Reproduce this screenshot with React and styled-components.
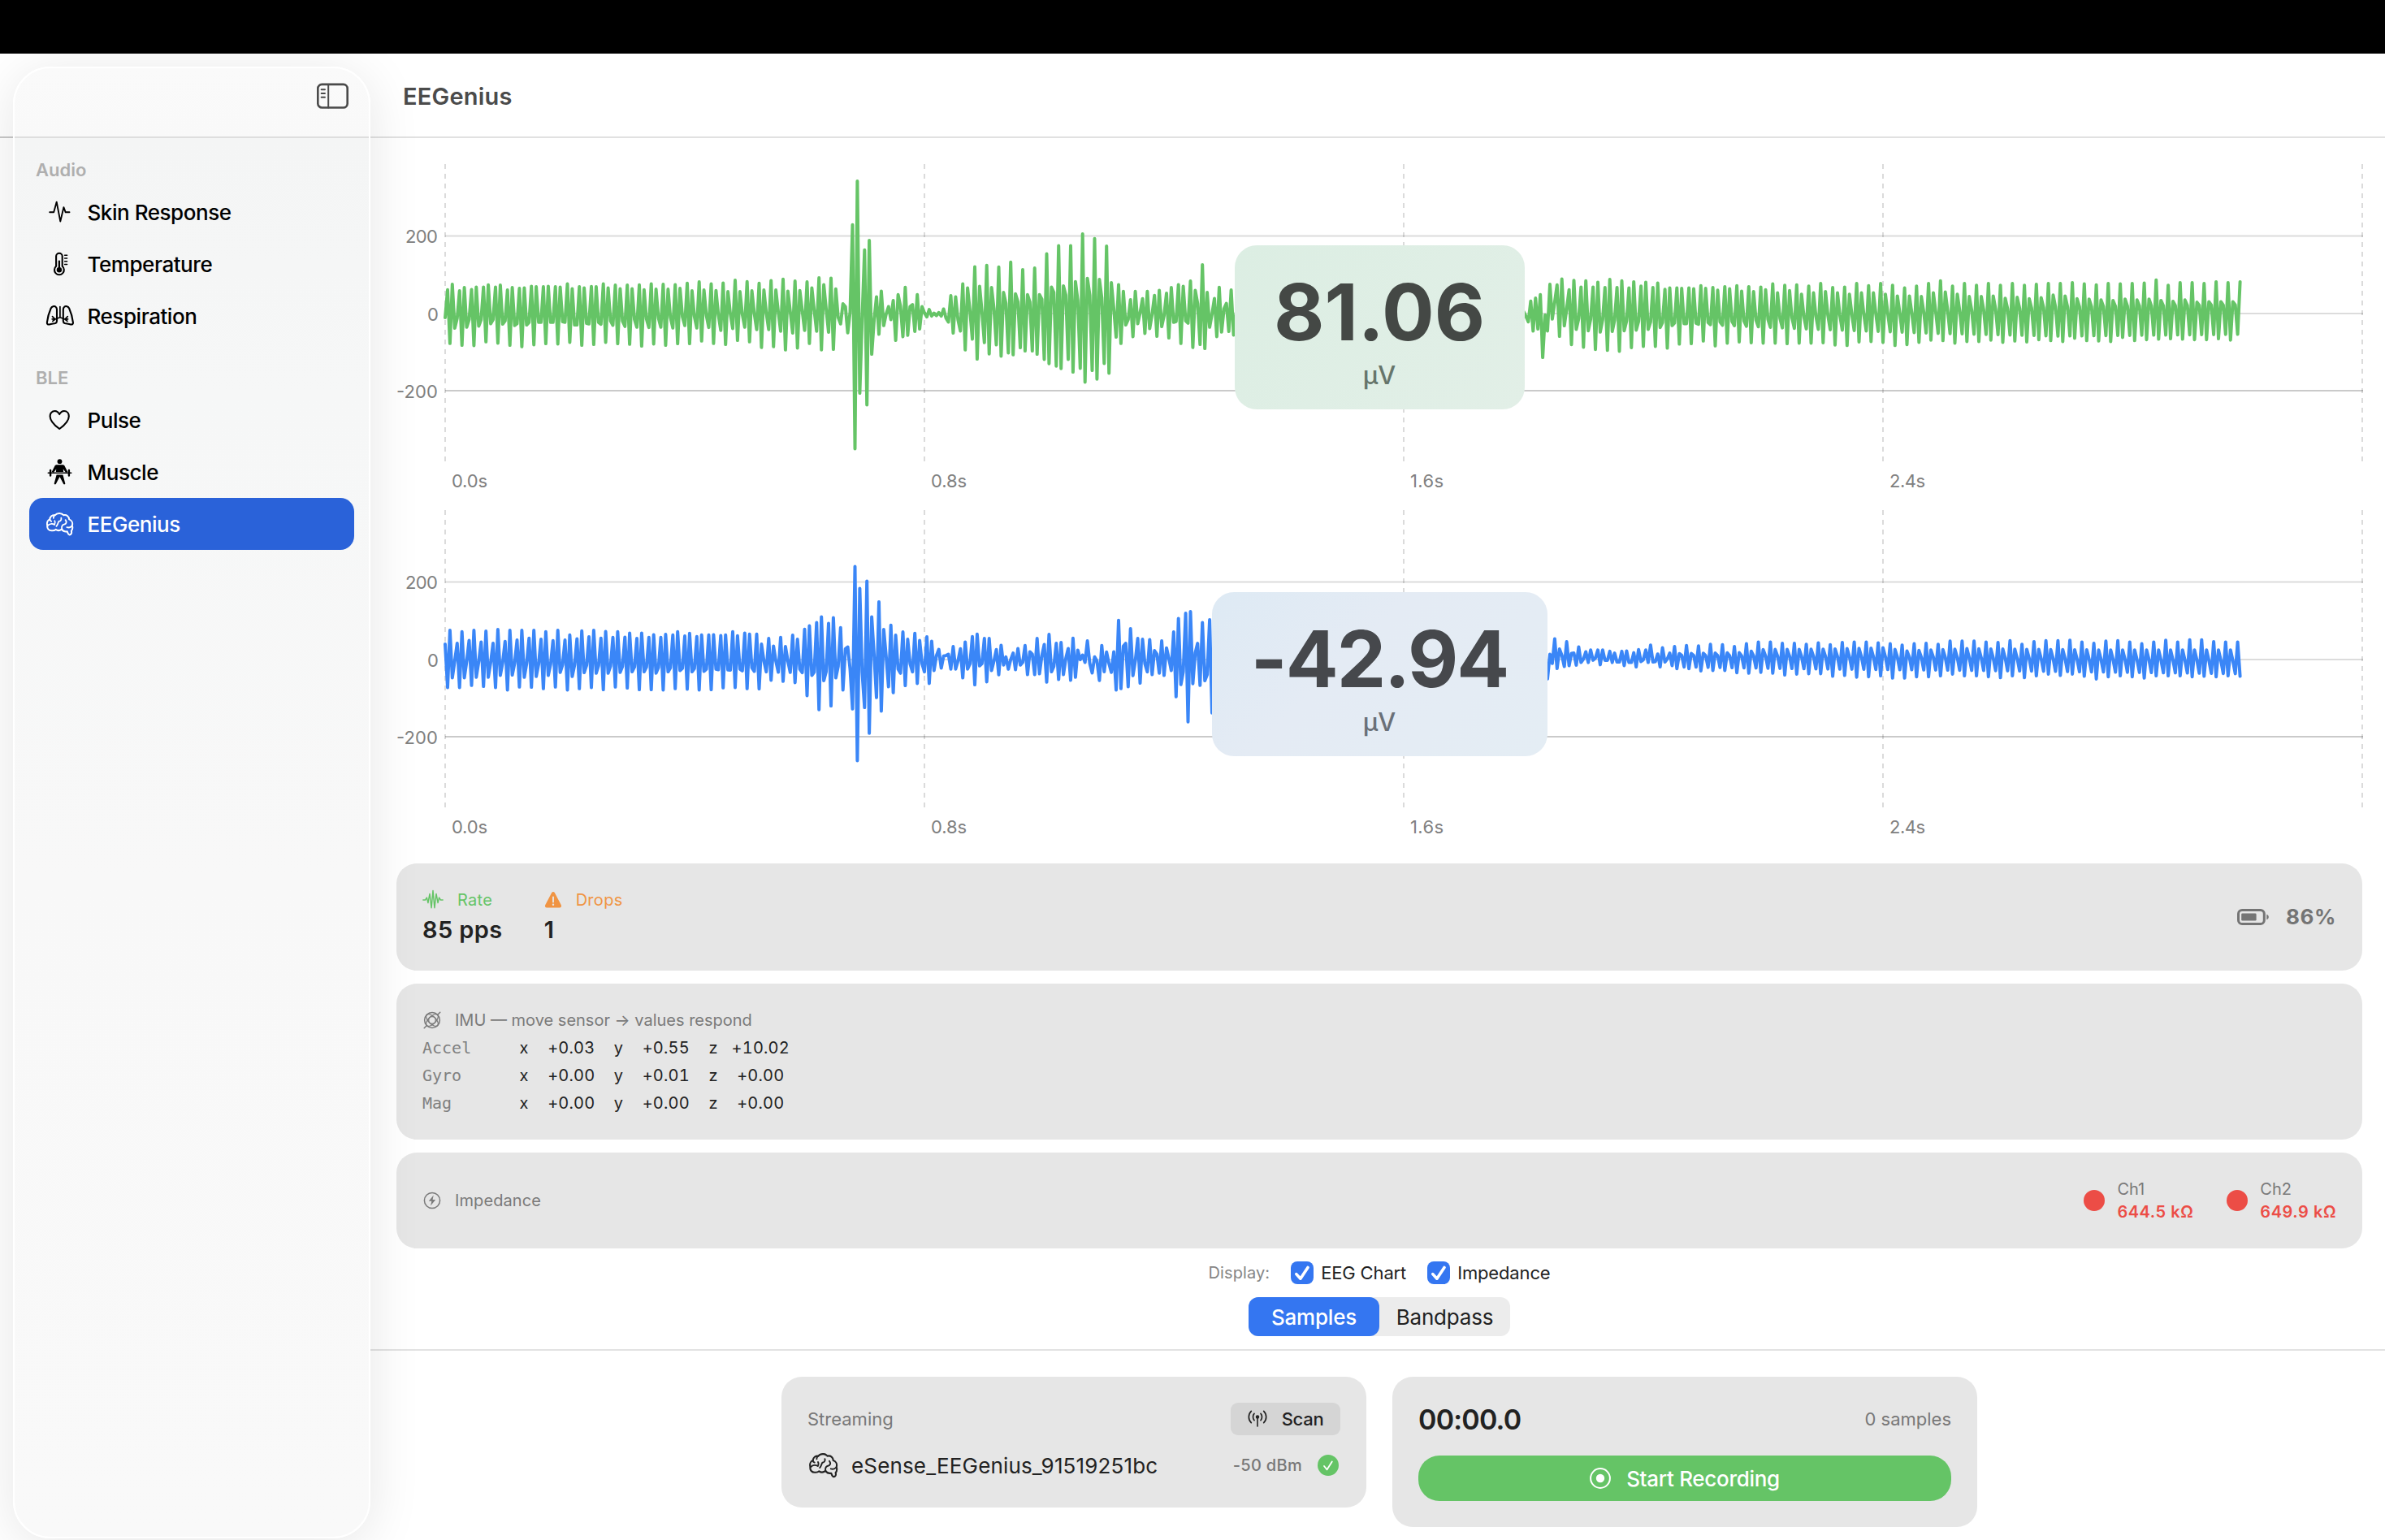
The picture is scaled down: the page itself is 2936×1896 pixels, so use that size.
import React from 'react';
import styled, { createGlobalStyle } from 'styled-components';

const GlobalStyle = createGlobalStyle`
  html, body { margin: 0; padding: 0; background: #fff; }
  * { box-sizing: border-box; }
  body { width: 2936px; height: 1896px; overflow: hidden; font-family: Inter, "Liberation Sans", sans-serif; color: #000; }
`;

/* ---------- signal data ---------- */

// Mains hum repeats every five samples, so steady stretches are kept as five tracks.
const weave = (...tracks) => {
  const out = [];
  for (let i = 0; i < tracks[0].length; i++) tracks.forEach((t) => t[i] !== undefined && out.push(t[i]));
  return out;
};
const ramp = (n, stops) =>
  Array.from({ length: n }, (_, i) => {
    let j = 0;
    while (j < stops.length - 2 && stops[j + 1][0] <= i) j++;
    const [a, va] = stops[j];
    const [b, vb] = stops[j + 1];
    return va + ((vb - va) * (i - a)) / (b - a);
  });
const level = (raw, zero, gain) => raw.map((v) => (v - zero) * gain);

const greenStart = level(
  [
    ...weave(
      [633, 635, 640, 640, 640, 645, 655, 650, 650, 650, 650, 660, 656, 657, 661, 665, 668, 669, 668, 671, 662, 671, 669, 680, 673, 668, 677, 677, 683, 690, 680, 683, 687],
      [530, 534, 529, 520, 520, 531, 525, 517, 519, 519, 508, 519, 518, 508, 513, 513, 512, 508, 510, 511, 506, 501, 508, 505, 495, 500, 506, 496, 491, 498, 501, 486, 487],
      [728, 735, 736, 722, 727, 735, 740, 733, 729, 730, 724, 735, 732, 724, 729, 731, 738, 730, 735, 729, 729, 719, 728, 732, 717, 722, 743, 740, 752, 745, 728, 752, 750],
      [510, 522, 520, 512, 513, 522, 523, 519, 517, 520, 526, 523, 519, 523, 526, 526, 530, 528, 528, 525, 534, 531, 533, 537, 537, 534, 531, 531, 535, 533, 523, 511, 527],
      [672, 668, 664, 655, 657, 662, 660, 650, 650, 648, 660, 654, 650, 645, 645, 640, 638, 635, 632, 630, 628, 625, 622, 620, 620, 618, 615, 612, 610, 608, 605, 600, 632],
    ),
    656, 582, 592, 689, 612, 290, 1117, 129, 912, 640, 383, 955, 348, 768, 640, 556, 694, 535, 662, 620,
    592, 640, 570, 717, 548, 590, 703, 521, 698, 592, 585, 684, 548, 675, 592, 615,
    630, 603, 627, 616, 625, 614, 627, 601, 635, 649, 552, 690, 556, 640, 682, 508, 752, 523, 610, 712,
    445, 786, 517, 610, 725, 440, 767, 522, 600, 733, 446, 775, 540, 580, 763, 428, 770, 545, 575, 744,
    456, 756, 548, 575, 756, 450, 768, 548, 565, 787, 397, 803, 520, 540, 812, 367, 821, 516, 550, 787,
    367, 834, 500, 570, 820, 324, 871, 488, 550, 828, 341, 860, 492, 560, 802, 369, 838, 504, 600, 705,
    511, 728, 536, 660, 640, 567, 703, 536, 655, 615, 563, 691, 536, 673, 620, 551, 702, 532, 666, 625,
    543, 708, 522, 650, 647, 511, 728, 517, 645, 653, 498, 743, 532, 580, 732, 438, 747, 540, 668, 620,
    562, 703, 521, 686, 600, 580, 684, 531, 697,
    ...weave(Array(24).fill(620), Array(24).fill(560), Array(24).fill(690), Array(24).fill(550), Array(24).fill(640)),
    610,
  ],
  617,
  1 / 3,
);
const greenMid = level(
  [-11, -31, 45, -65, 56, -58, 69, -163, -6, -65, 107, -21, 42, 105, -85, 127, -46, 16],
  0,
  -1 / 3,
);
const greenEnd = level(
  weave(
    [321, 315, 315, 316, 316, 317, 313, 316, 320, 317, 317, 312, 316, 314, 312, 314, 315, 308, 311, 310, 313, 307, 316, 315, 307, 312, 307, 311, 317, 313, 307, 301, 313, 307, 311, 307, 311, 307, 311, 309, 307, 307, 305, 308, 310, 307, 308, 307, 306, 299, 311, 305, 305, 307, 303, 305, 303],
    [444, 450, 455, 457, 459, 451, 448, 448, 452, 443, 442, 436, 447, 441, 438, 440, 441, 441, 442, 441, 441, 440, 445, 446, 438, 437, 439, 446, 444, 439, 434, 435, 441, 437, 437, 434, 439, 436, 438, 433, 435, 437, 430, 435, 436, 437, 428, 435, 433, 432, 431, 432, 433, 433, 431, 434],
    [300, 301, 304, 298, 301, 303, 304, 306, 317, 318, 319, 318, 322, 319, 324, 325, 321, 328, 323, 331, 328, 325, 328, 331, 328, 328, 331, 335, 335, 336, 328, 326, 331, 336, 336, 335, 340, 338, 341, 339, 333, 335, 341, 342, 344, 345, 342, 344, 342, 345, 347, 344, 349, 348, 348, 348],
    ramp(56, [[0, 410], [2, 416], [6, 410], [9, 397], [14, 391], [20, 380], [30, 370], [40, 360], [55, 355]]),
    ramp(56, [[0, 386], [9, 397], [20, 410], [30, 419], [40, 425], [55, 421]]),
  ),
  374,
  0.5485,
);
const GREEN = [...greenStart, ...greenMid, ...greenEnd];

const blueStart = level(
  [
    ...weave(
      [458, 455, 444, 450, 455, 448, 443, 436, 440, 445, 443, 438, 431, 436, 433, 432, 437, 433, 433, 424, 428, 430, 424, 426, 412, 417, 421, 437, 433, 425, 403, 378, 381],
      [618, 618, 610, 614, 618, 627, 616, 617, 622, 616, 627, 622, 618, 626, 616, 620, 626, 626, 627, 622, 624, 627, 626, 619, 618, 622, 623, 591, 595, 600, 648, 700, 686],
      [407, 412, 407, 410, 404, 407, 407, 407, 412, 407, 424, 409, 407, 411, 412, 417, 417, 423, 422, 412, 418, 424, 423, 424, 427, 421, 458, 465, 467, 440, 390, 357, 360],
      [582, 582, 580, 580, 573, 572, 580, 577, 573, 562, 577, 563, 565, 565, 562, 560, 560, 565, 560, 555, 560, 558, 550, 553, 550, 545, 520, 520, 520, 550, 573, 593, 582],
      ramp(33, [[0, 520], [10, 535], [20, 548], [26, 560], [29, 563], [31, 560], [32, 540]]),
    ),
    397, 627, 475, 468, 550, 697, 171, 888, 252, 560, 692, 225, 787, 357, 500, 655, 302, 705, 404, 500,
    615, 388, 637, 425, 550, 565, 413, 611, 440, 530, 560, 418, 603, 444, 530, 560, 431, 603, 447, 555,
    500, 477, 546, 502, 500, 495, 550, 467, 550, 520, 475, 582, 450, 550, 530, 430, 608, 421, 538, 530,
    437, 597, 437, 555, 520, 478, 571, 462, 535, 505, 550, 515, 491, 552, 474, 535, 525, 463, 570, 486,
    495, 570, 437, 567, 500, 459, 598, 422, 560, 540, 455, 588, 452, 570, 510, 474, 591, 436, 580, 480,
    515, 498, 525, 446, 530, 564, 505, 520, 592, 463, 560, 487, 530, 562, 486, 627, 370, 622, 465, 455,
    615, 401, 574, 520, 437, 602, 440, 530, 560, 441, 570, 482, 495, 565, 446, 573, 472, 510, 555, 413,
    652, 363, 607, 560, 344, 745, 338, 604, 490, 455, 610, 378, 593, 570, 368, 712,
    ...weave(Array(28).fill(480), Array(28).fill(560), Array(28).fill(450), Array(28).fill(570), Array(28).fill(520)).slice(0, 139),
  ],
  514,
  1 / 3,
);
const blueMid = level([-72, 19, -15, 76, -34, 38, 15, -26, 65, -23, 22], 0, -1 / 3);
const blueEnd = level(
  [
    1137, 1164, 1123, 1158, 1150, 1134, 1158, 1130, 1153, 1148, 1130, 1163, 1130, 1153, 1153, 1133, 1158, 1137, 1157, 1157, 1133,
    1165, 1132, 1158, 1158, 1136, 1168, 1129, 1156, 1152, 1130, 1158, 1119, 1157, 1156, 1139, 1168, 1125, 1157, 1150, 1137, 1165,
    ...weave(
      [1122, 1120, 1121, 1117, 1118, 1122, 1116, 1112, 1112, 1115, 1115, 1117, 1114, 1118, 1113, 1112, 1112, 1114, 1116, 1119, 1116, 1115, 1117, 1110, 1110, 1110, 1112, 1113, 1109, 1117, 1111, 1109, 1109, 1108, 1112, 1115, 1110, 1109, 1112, 1116, 1112, 1108, 1112, 1107, 1107, 1111, 1112, 1112],
      [1172, 1172, 1177, 1176, 1176, 1181, 1182, 1180, 1182, 1186, 1184, 1183, 1183, 1189, 1187, 1191, 1190, 1188, 1193, 1193, 1190, 1190, 1188, 1184, 1188, 1188, 1190, 1192, 1188, 1192, 1188, 1184, 1187, 1184, 1189, 1195, 1190, 1188, 1190, 1193, 1188, 1188, 1188, 1190, 1189, 1190, 1188, 1189],
      ramp(47, [[0, 1138], [5, 1136], [7, 1129], [12, 1128], [17, 1125], [19, 1132], [24, 1127], [35, 1130], [46, 1130]]),
      ramp(47, [[0, 1142], [20, 1146], [46, 1154]]),
      ramp(47, [[0, 1168], [10, 1172], [25, 1176], [46, 1183]]),
    ),
  ],
  1151,
  0.5485,
);
const BLUE = [...blueStart, ...blueMid, ...blueEnd];

/* ---------- icons ---------- */

const Svg = styled.svg`
  display: block;
  flex: none;
`;
const Stroke = ({ size = 36, w = 2, box = 36, children }) => (
  <Svg width={size} height={size} viewBox={`0 0 ${box} ${box}`} fill="none" stroke="currentColor" strokeWidth={w} strokeLinecap="round" strokeLinejoin="round">
    {children}
  </Svg>
);
const SidebarToggleIcon = () => (
  <Svg width="40" height="34" viewBox="0 0 40 34" fill="none" stroke="currentColor" strokeWidth="2.6" strokeLinecap="round">
    <rect x="1.3" y="1.9" width="36.4" height="28.6" rx="5" />
    <path d="M14.2 2v28.400" strokeWidth="2" />
    <path d="M5.600 8.300h4.400M5.600 13h4.400M5.600 17.700h4.400" strokeWidth="1.900" />
  </Svg>
);
const WaveIcon = () => (
  <Stroke w={1.9}>
    <path d="M6.2 18.3h5L14.7 5.6l4.6 24 4.100-17.400 2.300 6.100h4.800" />
  </Stroke>
);
const ThermometerIcon = () => (
  <Stroke w={2.1}>
    <path d="M14.100 8.600a3.800 3.800 0 0 1 7.600 0v12.200a5.900 5.900 0 1 1-7.600 0z" />
    <path d="M17.900 14.600v9" strokeWidth="2.300" />
    <circle cx="17.900" cy="25.300" r="3.200" fill="currentColor" stroke="none" />
    <path d="M24.600 7.200h3M24.600 11h3M24.600 14.800h3M24.600 18.400h3" strokeWidth="1.500" />
  </Stroke>
);
const LungsIcon = () => (
  <Stroke w={2.1}>
    <path d="M13.600 6.800c-1.600-1.400-4.800-.8-6 1.900C5.400 13.600 3.600 20 2.900 25.900c-.3 2.300 1.100 3 3 2.500 2.300-.6 5-1 7.200-1.500 1.400-.4 1.900-1.200 1.900-2.600V10c0-1.500-.4-2.500-1.400-3.200z" />
    <path d="M24.200 6.800c1.600-1.400 4.800-.8 6 1.900 2.200 4.900 4 11.300 4.700 17.200.3 2.300-1.100 3-3 2.500-2.300-.6-5-1-7.200-1.500-1.400-.4-1.900-1.200-1.900-2.600V10c0-1.500.4-2.500 1.400-3.200z" />
    <path d="M18.900 6.600v13.200M18.900 19.800l-6 2.200-3.700-.2M12.900 22l-3.400-3.400M12.900 22l-3 2.400M18.900 19.800l6 2.200 3.700-.2M24.900 22l3.400-3.400M24.900 22l3 2.400" strokeWidth="1.700" />
  </Stroke>
);
const HeartIcon = () => (
  <Stroke w={2.1}>
    <path d="M18.200 11.100C16.800 8.300 14.800 7 12.500 7 9 7 6.600 9.800 6.600 13.400c0 6.500 6.400 11.800 11.600 15.600 5.200-3.800 11.600-9.100 11.600-15.600C29.800 9.800 27.400 7 23.900 7c-2.300 0-4.300 1.300-5.700 4.100z" />
  </Stroke>
);
const LifterIcon = () => (
  <Stroke w={2}>
    <g fill="currentColor" stroke="none">
      <circle cx="18.500" cy="5.200" r="2.900" />
      <path d="M14.800 9.200h7.400c1.100 0 2 .5 2.400 1.500l3.700 7.200-2.200 1.200-3.300-4.600.3 3.600h-9.200l.3-3.600-3.300 4.600-2.200-1.200 3.700-7.200c.4-1 1.300-1.500 2.400-1.500z" />
      <path d="M14.600 21.400h7.800l2.900 10.900c.2 1.200-1.700 1.600-2.200.5L18.500 24l-4.600 8.800c-.5 1.100-2.400.7-2.200-.5z" />
    </g>
    <path d="M4.300 19.300h28.400" strokeWidth="1.600" />
    <path d="M7.100 16v6.600M29.900 16v6.600" strokeWidth="2.400" />
  </Stroke>
);
const BrainIcon = ({ size }) => (
  <Stroke w={2} size={size}>
    <path d="M9.200 26.300C5 26.700 2.700 23.500 3.300 20c-1-3.600.4-6.600 3-7.600.3-3.600 3.200-5.600 6.300-5.100 2.600-3.200 8.300-3.200 10.600-.1 4-.9 6.700 1.800 6.900 5.200 3.200 1.200 4.800 4.300 3.700 7.600 1 2.800.3 5.200-1 6.800.9 2.500-.3 4.700-2.400 4.600-1.600-.2-2-2.500-2.700-4.200-2.800.6-5.300-.6-6.700-2.600-2.300 1.700-5.500 1.700-7.400.3-1 .9-2.500 1.500-4.400 1.400z" />
    <path d="M6.300 12.500c.2 1 .9 1.900 1.900 2.300M3.600 20.200c2.400-2.600 6-2.700 8.500-1.200.9-1.700 1-3.300.2-4.800M12.600 7.300c-1.300.8-2 2-1.800 3.500M20.300 10.600c.6 2.200-.6 3.900-2.900 4.300M17.400 14.900c-1.300 2.200-1.200 4-3 6M25.600 13.100c2 2.600 1 5-1.700 5.600-2.300.5-3.500 2.500-2.700 5.900M33.300 20.600c-1.400 1.700-3.800 2.200-6 1.500" strokeWidth="1.800" />
  </Stroke>
);
const RateIcon = () => (
  <Stroke size={26} box={24} w={1.35}>
    <path d="M.8 12h2.500L5 9.300l1.400 6L8.300 5l1.900 16L12 1.300 13.800 21l1.900-16 1.900 10.300 1.400-6 1.700 2.700h2.500" />
  </Stroke>
);
const WarningIcon = () => (
  <Svg width="22" height="22" viewBox="0 0 22 22">
    <path d="M9.200 2.100c.8-1.400 2.800-1.400 3.600 0l8 15.200c.8 1.500-.2 3.200-1.900 3.200H3.100c-1.700 0-2.700-1.700-1.900-3.200z" fill="currentColor" />
    <path d="M11 7.500v6" stroke="#e6e6e6" strokeWidth="1.900" strokeLinecap="round" />
    <circle cx="11" cy="16.800" r="1.200" fill="#e6e6e6" />
  </Svg>
);
const GyroIcon = () => (
  <Stroke size={24} box={24} w={1.5}>
    <circle cx="12" cy="12" r="9.400" />
    <circle cx="12" cy="12" r="4.300" strokeWidth="1.300" />
    <ellipse cx="12" cy="12" rx="9.400" ry="4.600" transform="rotate(-45 12 12)" strokeWidth="1.300" />
    <ellipse cx="12" cy="12" rx="9.400" ry="4.600" transform="rotate(45 12 12)" strokeWidth="1.300" />
    <path d="M18.800 5.200l3-3M5.200 18.800l-3 3" strokeWidth="1.500" />
  </Stroke>
);
const BoltIcon = () => (
  <Stroke size={24} box={24} w={1.5}>
    <circle cx="12" cy="12" r="9.600" />
    <path d="M13.700 5.600l-5.900 7.200h3.500l-1.200 5.600 6.100-7.400h-3.600z" fill="currentColor" stroke="none" />
  </Stroke>
);
const BatteryIcon = () => (
  <Svg width="40" height="20" viewBox="0 0 40 20">
    <rect x="1.500" y="1.500" width="31.800" height="17" rx="4.600" fill="none" stroke="currentColor" strokeWidth="3" />
    <rect x="5.200" y="5.400" width="18.400" height="9.200" rx="1.400" fill="currentColor" />
    <path d="M36.300 6.800c1.500.5 2.500 1.800 2.500 3.200s-1 2.700-2.500 3.200z" fill="currentColor" />
  </Svg>
);
const AntennaIcon = () => (
  <Stroke size={24} box={24} w={1.7}>
    <circle cx="12" cy="9.500" r="2.200" fill="currentColor" stroke="none" />
    <path d="M12 10v11" strokeWidth="1.600" />
    <path d="M8 5.400c-2 2.200-2 6 0 8.200M16 5.400c2 2.200 2 6 0 8.200M4.300 2.400c-4 4-4 10.200 0 14.200M19.700 2.400c4 4 4 10.200 0 14.200" />
  </Stroke>
);
const CheckCircleIcon = () => (
  <Svg width="26" height="26" viewBox="0 0 26 26">
    <circle cx="13" cy="13" r="13" fill="#65c466" />
    <path d="M8 14l3.600 4.300 6.200-9.800" fill="none" stroke="#fff" strokeWidth="1.800" strokeLinecap="round" strokeLinejoin="round" />
  </Svg>
);
const RecordIcon = () => (
  <Svg width="26" height="26" viewBox="0 0 26 26">
    <circle cx="13" cy="13" r="11.900" fill="none" stroke="#fff" strokeWidth="2" />
    <circle cx="13" cy="13" r="5.200" fill="#fff" />
  </Svg>
);
const CheckMark = () => (
  <Svg width="28" height="28" viewBox="0 0 28 28">
    <path d="M6.800 15.600l5.100 5.600 9.100-13.800" fill="none" stroke="#fff" strokeWidth="3.600" strokeLinecap="round" strokeLinejoin="round" />
  </Svg>
);

/* ---------- window ---------- */

const Screen = styled.div`
  width: 2936px;
  height: 1896px;
  display: flex;
  flex-direction: column;
  background: #fff;
  overflow: hidden;
`;
const MenuBar = styled.div`
  height: 66px;
  flex: none;
  background: #000;
  position: relative;
  z-index: 3;
`;
const Window = styled.div`
  flex: 1;
  display: flex;
  min-height: 0;
`;
const SidebarColumn = styled.div`
  width: 456px;
  flex: none;
  padding: 16px 0 2px 16px;
  position: relative;
  z-index: 2;
  background: linear-gradient(#fff 102px, #c8c8c8 102px, #c8c8c8 104px, #fff 104px);
`;
const Sidebar = styled.nav`
  height: 100%;
  border-radius: 46px;
  border: 2px solid #fff;
  padding: 0 18px;
  background: linear-gradient(#fafafa 0, #f9f9f9 84px, #dedede 84px, #dedede 86px, #f4f5f5 86px, #f6f7f7 400px, #f8f8f8 1000px, #f9f9f9 100%);
  background-origin: padding-box;
  box-shadow: 0 8px 64px rgba(0, 0, 0, 0.1);
`;
const SidebarTop = styled.div`
  height: 105px;
  display: flex;
  justify-content: flex-end;
  padding: 18px 6px 0 0;
  color: #4a4a4a;
`;
const SectionTitle = styled.div`
  height: 40px;
  margin-top: ${(p) => p.$gap || 0}px;
  padding-left: 8px;
  font-size: 22px;
  font-weight: 600;
  line-height: 40px;
  color: #afafaf;
`;
const NavItem = styled.div`
  height: 64px;
  display: flex;
  align-items: center;
  gap: 17px;
  padding-left: 18.500px;
  border-radius: 17px;
  font-size: 26px;
  font-weight: 500;
  letter-spacing: -0.450px;
  color: ${(p) => (p.$active ? '#fff' : '#000')};
  background: ${(p) => (p.$active ? '#2a62d9' : 'transparent')};
`;
const Main = styled.main`
  flex: 1;
  display: flex;
  flex-direction: column;
`;
const TitleBar = styled.header`
  height: 104px;
  flex: none;
  border-bottom: 2px solid #e1e1e1;
  display: flex;
  align-items: center;
  padding: 2px 0 0 40px;
  font-size: 29px;
  font-weight: 600;
  letter-spacing: 0.200px;
  color: #4b4b4b;
`;
const Content = styled.div`
  padding: 32px 28px 0 32px;
  display: flex;
  flex-direction: column;
`;

/* ---------- charts ---------- */

const ChartPanel = styled.section`
  position: relative;
  height: ${(p) => p.$height}px;
  svg { overflow: visible; }
  text { font-size: 22px; fill: #808080; }
`;
const Badge = styled.div`
  position: absolute;
  top: ${(p) => p.$top}px;
  left: 50%;
  width: ${(p) => p.$width}px;
  height: 202px;
  margin-left: ${(p) => -p.$width / 2}px;
  border-radius: 27px;
  background: ${(p) => p.$fill};
  display: flex;
  flex-direction: column;
  align-items: center;
  padding-top: 30px;
`;
const BadgeValue = styled.div`
  font-size: 96px;
  font-weight: 700;
  line-height: 104px;
  letter-spacing: ${(p) => p.$track}px;
  color: ${(p) => p.$color};
`;
const BadgeUnit = styled.div`
  margin-top: 4px;
  font-size: 31px;
  font-weight: 500;
  line-height: 44px;
  color: ${(p) => p.$color};
`;

const STEP = 2.95;
const TICKS = [60, 650, 1240, 1830, 2420];
const LEVELS = [
  { y: 88.5, label: '200', width: 40, line: '#dcdcdc' },
  { y: 184, label: '0', width: 13, line: '#dcdcdc' },
  { y: 279, label: '-200', width: 51, line: '#cacaca' },
];

const Chart = ({ samples, color, height, badge, value, unit }) => (
  <ChartPanel $height={height}>
    <Svg width="2420" height="400" viewBox="0 0 2420 400">
      {LEVELS.map(({ y, label, width, line }) => (
        <g key={label}>
          <path d={`M60 ${y}H2421`} stroke={line} strokeWidth="2" />
          <text x={51 - width} y={y + 8.5} textLength={width}>{label}</text>
        </g>
      ))}
      {TICKS.map((x, i) => (
        <g key={x}>
          <path d={`M${x} 0V366`} stroke="#000" strokeOpacity="0.14" strokeWidth="2" strokeDasharray="6 6" />
          {i < 4 && <text x={x + 8} y="397.500" textLength={i === 2 ? 41 : 44}>{`${(i * 0.8).toFixed(1)}s`}</text>}
        </g>
      ))}
      <polyline
        points={samples.map((v, i) => `${(60 + i * STEP).toFixed(1)},${(183.8 + v).toFixed(1)}`).join(' ')}
        fill="none"
        stroke={color}
        strokeWidth="4"
        strokeLinejoin="round"
        strokeLinecap="round"
      />
    </Svg>
    <Badge $width={badge.width} $fill={badge.fill} $top={badge.top}>
      <BadgeValue $color={badge.text} $track={badge.track}>{value}</BadgeValue>
      <BadgeUnit $color={badge.unit}>{unit}</BadgeUnit>
    </Badge>
  </ChartPanel>
);

/* ---------- status cards ---------- */

const Cards = styled.div`
  display: flex;
  flex-direction: column;
  gap: 16px;
`;
const Card = styled.section`
  height: ${(p) => p.$height}px;
  border-radius: 25px;
  background: #e6e6e6;
  padding: ${(p) => p.$pad || '0 32px'};
  display: flex;
  align-items: ${(p) => p.$align || 'center'};
  justify-content: space-between;
`;
const Stats = styled.div`
  display: flex;
  gap: 51px;
`;
const Stat = styled.div`
  display: flex;
  flex-direction: column;
`;
const StatLabel = styled.div`
  display: flex;
  align-items: center;
  gap: 17px;
  height: 30px;
  font-size: 20px;
  letter-spacing: 0.300px;
  color: ${(p) => p.$color};
`;
const StatValue = styled.div`
  height: 44px;
  font-size: 29px;
  font-weight: 600;
  line-height: 44px;
  letter-spacing: 0.400px;
  color: #222;
`;
const Battery = styled.div`
  display: flex;
  align-items: center;
  gap: 20px;
  margin-top: 20px;
  font-size: 26px;
  font-weight: 700;
  letter-spacing: 0.600px;
  color: #747474;
`;
const ImuBlock = styled.div`
  display: flex;
  flex-direction: column;
`;
const CardTitle = styled.div`
  display: flex;
  align-items: center;
  gap: 16px;
  height: 30px;
  font-size: 20px;
  letter-spacing: ${(p) => p.$track || 0}px;
  color: #7a7a7a;
`;
const ImuTable = styled.div`
  margin-top: 2px;
`;
const ImuRow = styled.div`
  display: grid;
  grid-template-columns: 102px repeat(3, 46px 70.500px);
  height: 34px;
  align-items: center;
  justify-items: center;
  font-size: 20px;
  letter-spacing: 0.200px;
  color: #222;
  font-feature-settings: 'tnum';
`;
const ImuName = styled.span`
  justify-self: start;
  font-family: "DejaVu Sans Mono", "Liberation Mono", monospace;
  font-size: 20px;
  letter-spacing: 0;
  color: #808080;
`;
const Channels = styled.div`
  display: flex;
  gap: 41px;
`;
const Channel = styled.div`
  display: flex;
  align-items: center;
  gap: 15px;
`;
const Dot = styled.span`
  width: 26px;
  height: 26px;
  border-radius: 50%;
  background: #ec4d46;
`;
const ChannelText = styled.div`
  font-size: 20px;
  line-height: 28px;
  color: #7a7a7a;
  strong { display: block; font-weight: 600; letter-spacing: 0.550px; color: #ec4d46; white-space: nowrap; }
`;

/* ---------- display options ---------- */

const Options = styled.div`
  display: flex;
  align-items: center;
  justify-content: center;
  gap: 26px;
  height: 28px;
  margin-top: 16px;
`;
const OptionsLabel = styled.span`
  font-size: 20px;
  letter-spacing: 0.100px;
  color: #868686;
`;
const Option = styled.label`
  display: flex;
  align-items: center;
  gap: 9px;
  font-size: 22px;
  letter-spacing: -0.150px;
  color: #222;
`;
const CheckBox = styled.span`
  width: 28px;
  height: 28px;
  border-radius: 8px;
  background: #3476f1;
`;
const Segments = styled.div`
  display: flex;
  align-self: center;
  width: 322px;
  height: 48px;
  margin-top: 16px;
  border-radius: 12px;
  background: #ececec;
`;
const Segment = styled.div`
  width: 161px;
  border-radius: 12px;
  font-size: 26px;
  font-weight: ${(p) => (p.$active ? 500 : 400)};
  line-height: 49px;
  text-align: center;
  letter-spacing: -0.200px;
  color: ${(p) => (p.$active ? '#fff' : '#222')};
  background: ${(p) => (p.$active ? '#3476f1' : 'transparent')};
`;

/* ---------- footer ---------- */

const Footer = styled.footer`
  margin-top: 16px;
  border-top: 2px solid #e2e2e2;
  padding: 32px 0 0 4px;
  display: flex;
  justify-content: center;
  align-items: flex-start;
  gap: 32px;
`;
const Panel = styled.section`
  width: 720px;
  height: ${(p) => p.$height}px;
  border-radius: 25px;
  background: #e6e6e6;
  padding: 32px;
  display: flex;
  flex-direction: column;
`;
const PanelRow = styled.div`
  display: flex;
  align-items: center;
  justify-content: space-between;
  height: ${(p) => p.$height}px;
  margin-top: ${(p) => p.$gap || 0}px;
`;
const Muted = styled.span`
  font-size: ${(p) => p.$size}px;
  font-weight: ${(p) => p.$weight || 400};
  letter-spacing: ${(p) => p.$track || 0}px;
  color: #787878;
`;
const ScanButton = styled.div`
  display: flex;
  align-items: center;
  justify-content: center;
  gap: 18px;
  width: 135px;
  height: 40px;
  border-radius: 9px;
  background: #d5d5d5;
  font-size: 22px;
  font-weight: 500;
  letter-spacing: -0.300px;
  color: #222;
`;
const Device = styled.div`
  display: flex;
  align-items: center;
  gap: 16px;
  font-size: 26px;
  letter-spacing: 0.150px;
  color: #222;
`;
const Signal = styled.div`
  display: flex;
  align-items: center;
  gap: 19px;
  padding-right: 2px;
`;
const Timer = styled.span`
  font-size: 34px;
  font-weight: 600;
  letter-spacing: -0.800px;
  color: #222;
`;
const RecordButton = styled.div`
  display: flex;
  align-items: center;
  justify-content: center;
  gap: 19px;
  height: 56px;
  margin-top: 25px;
  border-radius: 26px;
  background: #65c466;
  font-size: 26px;
  font-weight: 500;
  letter-spacing: -0.300px;
  color: #fff;
`;

const AUDIO = [
  ['Skin Response', WaveIcon],
  ['Temperature', ThermometerIcon],
  ['Respiration', LungsIcon],
];
const BLE = [
  ['Pulse', HeartIcon],
  ['Muscle', LifterIcon],
  ['EEGenius', BrainIcon],
];
const IMU = [
  ['Accel', '+0.03', '+0.55', '+10.02'],
  ['Gyro', '+0.00', '+0.01', '+0.00'],
  ['Mag', '+0.00', '+0.00', '+0.00'],
];
const GREEN_BADGE = { top: 100, width: 357, fill: 'linear-gradient(135deg, #dceee3, #e2efe7)', text: '#444845', unit: '#66756b', track: 0 };
const BLUE_BADGE = { top: 101, width: 413, fill: 'linear-gradient(135deg, #deeaf4, #e4ebf4 40%, #e4edf4)', text: '#46484c', unit: '#6a7078', track: -2 };

const NavGroup = ({ items, active }) =>
  items.map(([name, Icon]) => (
    <NavItem key={name} $active={name === active}>
      <Icon />
      {name}
    </NavItem>
  ));

export default function App() {
  return (
    <>
      <GlobalStyle />
      <Screen>
        <MenuBar />
        <Window>
          <SidebarColumn>
            <Sidebar>
              <SidebarTop><SidebarToggleIcon /></SidebarTop>
              <SectionTitle>Audio</SectionTitle>
              <NavGroup items={AUDIO} />
              <SectionTitle $gap={24}>BLE</SectionTitle>
              <NavGroup items={BLE} active="EEGenius" />
            </Sidebar>
          </SidebarColumn>
          <Main>
            <TitleBar>EEGenius</TitleBar>
            <Content>
              <Chart samples={GREEN} color="#65c466" height={426} value="81.06" unit="μV" badge={GREEN_BADGE} />
              <Chart samples={BLUE} color="#3a86f7" height={435} value="-42.94" unit="μV" badge={BLUE_BADGE} />
              <Cards>
                <Card $height={132} $align="flex-start" $pad="30px 32px 0">
                  <Stats>
                    <Stat>
                      <StatLabel $color="#65c466"><RateIcon />Rate</StatLabel>
                      <StatValue>85 pps</StatValue>
                    </Stat>
                    <Stat>
                      <StatLabel $color="#f09443"><WarningIcon />Drops</StatLabel>
                      <StatValue>1</StatValue>
                    </Stat>
                  </Stats>
                  <Battery><BatteryIcon />86%</Battery>
                </Card>
                <Card $height={192} $align="flex-start" $pad="30px 32px 0">
                  <ImuBlock>
                    <CardTitle>
                      <GyroIcon />
                      IMU — move sensor → values respond
                    </CardTitle>
                    <ImuTable>
                      {IMU.map(([name, x, y, z]) => (
                        <ImuRow key={name}>
                          <ImuName>{name}</ImuName>
                          <span>x</span><span>{x}</span>
                          <span>y</span><span>{y}</span>
                          <span>z</span><span>{z}</span>
                        </ImuRow>
                      ))}
                    </ImuTable>
                  </ImuBlock>
                </Card>
                <Card $height={118}>
                  <CardTitle $track={0.1}><BoltIcon />Impedance</CardTitle>
                  <Channels>
                    <Channel><Dot /><ChannelText>Ch1<strong>644.5 kΩ</strong></ChannelText></Channel>
                    <Channel><Dot /><ChannelText>Ch2<strong>649.9 kΩ</strong></ChannelText></Channel>
                  </Channels>
                </Card>
              </Cards>
              <Options>
                <OptionsLabel>Display:</OptionsLabel>
                <Option><CheckBox><CheckMark /></CheckBox>EEG Chart</Option>
                <Option><CheckBox><CheckMark /></CheckBox>Impedance</Option>
              </Options>
              <Segments>
                <Segment $active>Samples</Segment>
                <Segment>Bandpass</Segment>
              </Segments>
            </Content>
            <Footer>
              <Panel $height={161}>
                <PanelRow $height={40}>
                  <Muted $size={22}>Streaming</Muted>
                  <ScanButton><AntennaIcon />Scan</ScanButton>
                </PanelRow>
                <PanelRow $height={36} $gap={19}>
                  <Device><BrainIcon size={38} />eSense_EEGenius_91519251bc</Device>
                  <Signal><Muted $size={20} $weight={500} $track={0.3}>-50 dBm</Muted><CheckCircleIcon /></Signal>
                </PanelRow>
              </Panel>
              <Panel $height={185}>
                <PanelRow $height={40}>
                  <Timer>00:00.0</Timer>
                  <Muted $size={22}>0 samples</Muted>
                </PanelRow>
                <RecordButton><RecordIcon />Start Recording</RecordButton>
              </Panel>
            </Footer>
          </Main>
        </Window>
      </Screen>
    </>
  );
}
